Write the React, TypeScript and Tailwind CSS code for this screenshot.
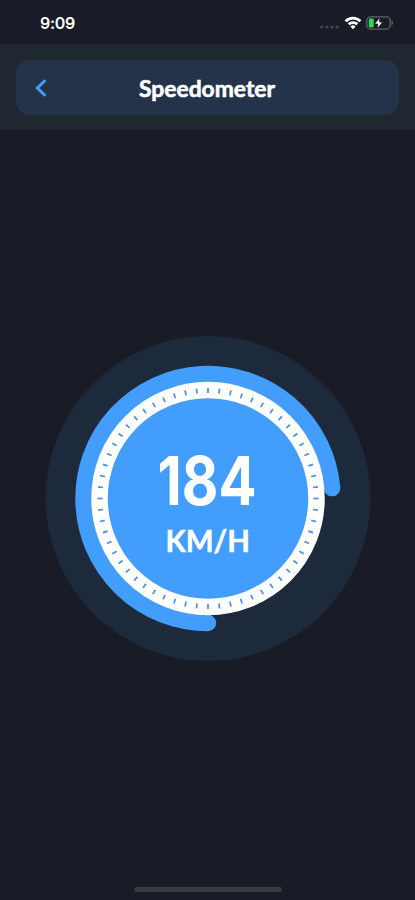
import React from 'react';

const TICKS = Array.from({ length: 60 }, (_, i) => i * 6);

const StatusBar: React.FC = () => (
  <div className="h-11 shrink-0 flex items-center justify-between pl-10 pr-[21px] pt-[2px]">
    <span className="text-[16px] leading-none font-semibold tracking-[-0.3px] font-['Inter',sans-serif]">9:09</span>
    <div className="flex items-center">
      <svg width="20" height="14" viewBox="0 0 20 14" fill="#454751" className="mr-1">
        <circle cx="1.8" cy="11" r="1.6" />
        <circle cx="6.9" cy="11" r="1.6" />
        <circle cx="12" cy="11" r="1.6" />
        <circle cx="17.1" cy="11" r="1.6" />
      </svg>
      <svg width="18" height="14" viewBox="0 0 18 14" fill="none" stroke="white" strokeWidth="2.8">
        <path d="M1.6 5.2a10.4 10.4 0 0 1 14.8 0" />
        <path d="M4.7 8.3a6.1 6.1 0 0 1 8.6 0" />
        <path d="M9 13.2 6.4 10.5a3.6 3.6 0 0 1 5.2 0z" fill="white" stroke="none" />
      </svg>
      <svg width="28" height="14" viewBox="0 0 28 14" className="ml-1">
        <rect x="0.8" y="0.8" width="23.4" height="12.4" rx="3.8" fill="none" stroke="#62646c" strokeWidth="1.3" />
        <path d="M25.6 4.6v4.8c2-.7 2-4.1 0-4.8z" fill="#62646c" />
        <rect x="2.8" y="2.6" width="5" height="8.8" rx="1.2" fill="#32d158" />
        <path d="M14 1.2 8.4 8h3.4l-.8 5 5.8-7h-3.4z" fill="white" stroke="#191b26" strokeWidth="0.8" />
      </svg>
    </div>
  </div>
);

const Header: React.FC = () => (
  <header className="h-[86px] shrink-0 bg-[#1f2731] px-4 pt-4">
    <div className="h-[55px] rounded-[14px] bg-[#243349] flex items-center px-[18px]">
      <button aria-label="Back" className="w-4">
        <svg width="14" height="20" viewBox="0 0 14 20" fill="none" stroke="#429dfd" strokeWidth="3">
          <path d="M11.3 2.2 3.3 10l8 7.8" />
        </svg>
      </button>
      <h1 className="flex-1 flex justify-center pr-4">
        <svg width="160" height="40" viewBox="0 0 160 40" className="font-['Lato',sans-serif] overflow-visible">
          <text x="11" y="28.5" fill="white" stroke="white" strokeWidth="0.6" fontSize="23" fontWeight="700" textLength="136" lengthAdjust="spacingAndGlyphs">Speedometer</text>
        </svg>
      </h1>
    </div>
  </header>
);

const Gauge: React.FC = () => (
  <svg width="326" height="326" viewBox="-163 -163.5 326 326" className="font-['Lato',sans-serif] overflow-visible">
    <circle r="162.5" fill="#1c2a3b" />
    <path d="M0 124.5A124.5 124.5 0 1 1 124.1 -10.4" fill="none" stroke="#429dfd" strokeWidth="16.5" strokeLinecap="round" />
    <circle r="108.5" fill="#429dfd" stroke="white" strokeWidth="16.5" />
    {TICKS.map((angle) => (
      <line key={angle} y1="-110.5" y2="-105.5" stroke="#4a8fe0" strokeWidth="1.7" transform={`rotate(${angle})`} />
    ))}
    <text x="-50.5" y="6" fill="white" fontSize="68" fontWeight="700" textLength="99" lengthAdjust="spacingAndGlyphs" className="font-['Inter',sans-serif]">184</text>
    <text x="-42.5" y="53.5" fill="white" stroke="white" strokeWidth="0.5" fontSize="31" fontWeight="700" textLength="84.5" lengthAdjust="spacingAndGlyphs">KM/H</text>
  </svg>
);

const App: React.FC = () => {
  return (
    <div className="w-full h-screen overflow-hidden flex flex-col bg-[#191b26] text-white">
      <StatusBar />
      <Header />
      <main className="flex-1 flex justify-center pt-[205px] pl-px">
        <Gauge />
      </main>
      <footer className="shrink-0 flex justify-center pb-[8px]">
        <div className="w-[148px] h-[5px] rounded-full bg-[#393b42]" />
      </footer>
    </div>
  );
};

export default App;
